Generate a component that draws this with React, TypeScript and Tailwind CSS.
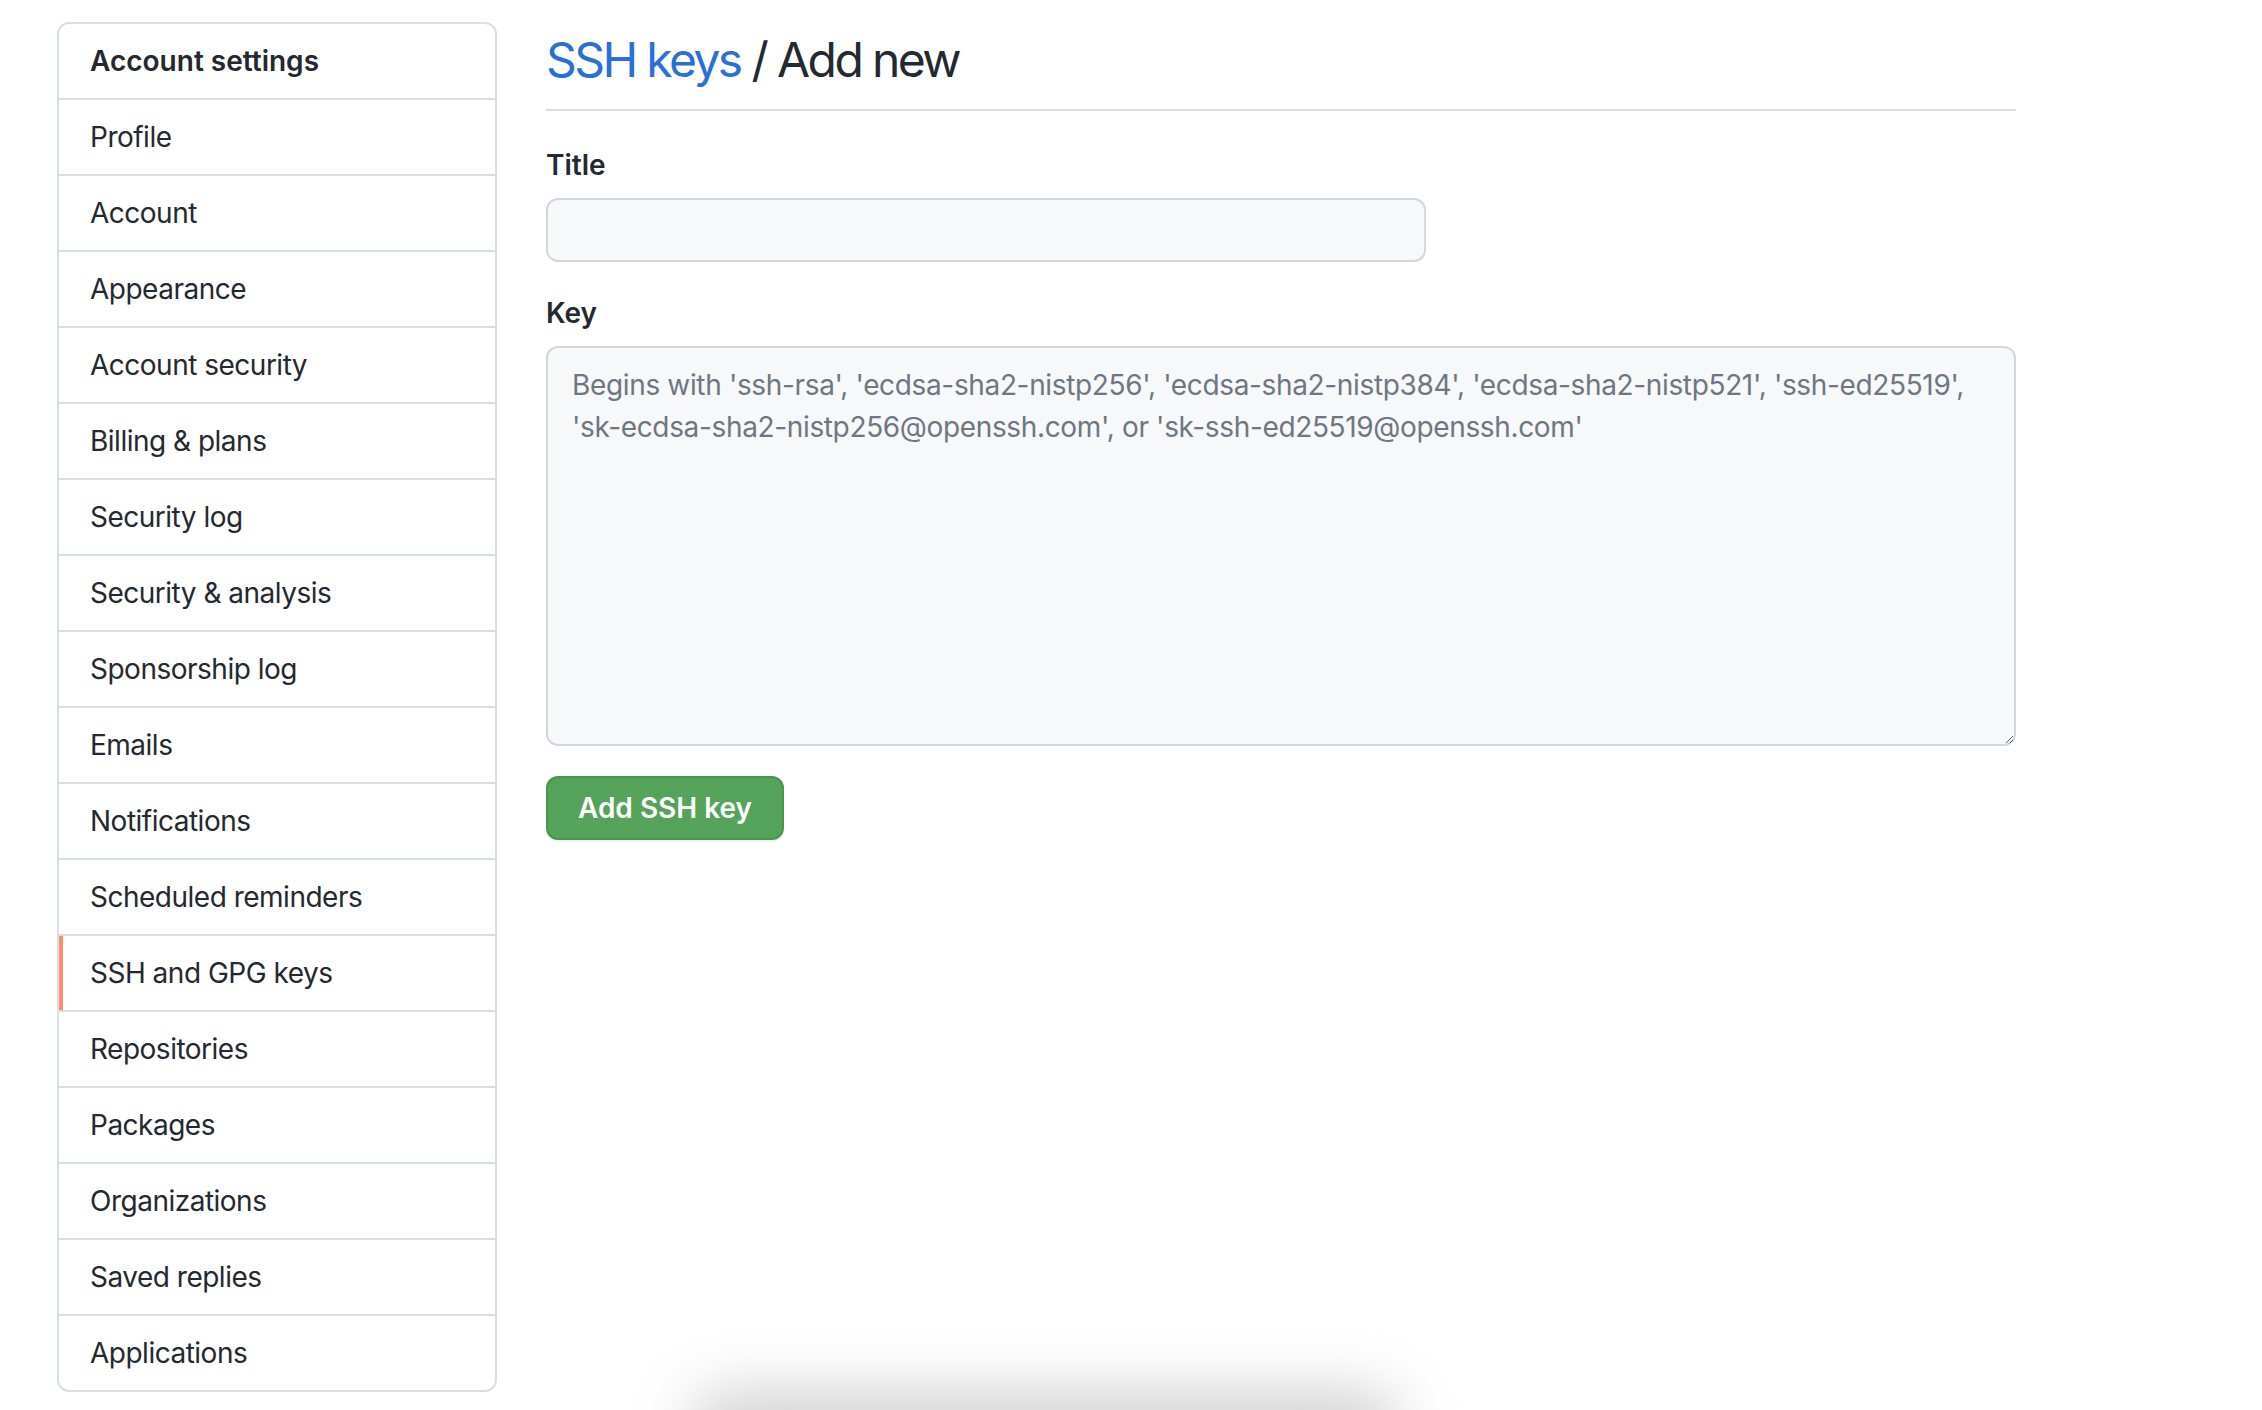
const menuItems = [
  'Profile',
  'Account',
  'Appearance',
  'Account security',
  'Billing & plans',
  'Security log',
  'Security & analysis',
  'Sponsorship log',
  'Emails',
  'Notifications',
  'Scheduled reminders',
  'SSH and GPG keys',
  'Repositories',
  'Packages',
  'Organizations',
  'Saved replies',
  'Applications',
];

const placeholder =
  "Begins with 'ssh-rsa', 'ecdsa-sha2-nistp256', 'ecdsa-sha2-nistp384', 'ecdsa-sha2-nistp521', 'ssh-ed25519', 'sk-ecdsa-sha2-nistp256@openssh.com', or 'sk-ssh-ed25519@openssh.com'";

const App = () => {
  return (
    <div className="relative h-[1410px] w-full overflow-hidden bg-white font-['Inter','Liberation_Sans',sans-serif] text-[#24292f]">
      <div className="flex gap-[49px] pl-[57px] pt-[22px]">
        {/* Settings menu */}
        <nav className="w-[440px] shrink-0 overflow-hidden rounded-[12px] border-2 border-[#d8dee4]">
          <div className="px-[31px] py-4 text-[28px] font-semibold leading-[42px]">Account settings</div>
          {menuItems.map((item) => (
            <MenuItem key={item} label={item} selected={item === 'SSH and GPG keys'} />
          ))}
        </nav>

        {/* Main form */}
        <main className="w-[1470px]">
          <div className="mt-[2px] border-b-2 border-[#d8dee4] pb-[13px]">
            <h1 className="text-[48px] font-normal leading-[72px] tracking-[-2.6px]">
              <a href="#" className="text-[#2b6fd6]">SSH keys</a> / Add new
            </h1>
          </div>

          <form className="mt-[33px]" onSubmit={(e) => e.preventDefault()}>
            <label className="block text-[28px] font-semibold leading-[42px]">Title</label>
            <input
              type="text"
              className="mt-3 block h-[64px] w-[880px] rounded-[12px] border-2 border-[#d0d7de] bg-[#f6f8fa] px-6 text-[28px] outline-none"
            />

            <label className="mt-[30px] block text-[28px] font-semibold leading-[42px]">Key</label>
            <textarea
              placeholder={placeholder}
              className="mt-3 block h-[400px] w-full rounded-[12px] border-2 border-[#d0d7de] bg-[#f6f8fa] px-6 py-4 text-[28px] leading-[42px] tracking-[-0.35px] outline-none placeholder:text-[#6e7781]"
            />

            <button
              type="submit"
              className="mt-[30px] h-[64px] w-[238px] rounded-[12px] border-2 border-[#4b9450] bg-[#55a35a] text-[28px] font-semibold text-white shadow-[0_2px_0_rgba(27,31,36,0.06)]"
            >
              Add SSH key
            </button>
          </form>
        </main>
      </div>

      {/* soft shadow peeking in at the bottom edge */}
      <div className="pointer-events-none absolute left-[690px] top-[1392px] h-[70px] w-[710px] rounded-full bg-[#cfcfcf] blur-[30px]" />
    </div>
  );
};

// Settings menu row
const MenuItem = ({ label, selected }: { label: string; selected: boolean }) => {
  return (
    <a
      href="#"
      className={
        selected
          ? 'block border-t-2 border-[#d8dee4] px-[31px] py-4 text-[28px] leading-[42px] tracking-[-0.5px] shadow-[inset_4px_0_0_#fd8c73]'
          : 'block border-t-2 border-[#d8dee4] px-[31px] py-4 text-[28px] leading-[42px] tracking-[-0.5px]'
      }
    >
      {label}
    </a>
  );
};

export default App;
